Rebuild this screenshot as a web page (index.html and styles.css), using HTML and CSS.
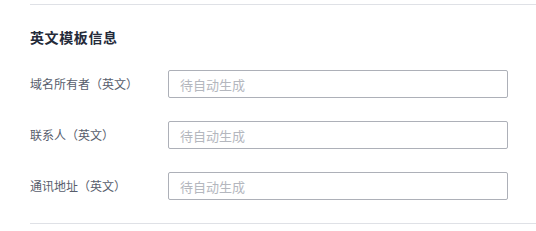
FILE: index.html
```html
<!DOCTYPE html>
<html lang="zh-CN">
<head>
<meta charset="utf-8">
<title>英文模板信息</title>
<link rel="stylesheet" href="styles.css">
</head>
<body>
<section class="panel">
  <h3 class="panel-title">英文模板信息</h3>
  <div class="form">
    <div class="row">
      <label class="label">域名所有者（英文）</label>
      <input class="field" type="text" placeholder="待自动生成">
    </div>
    <div class="row">
      <label class="label">联系人（英文）</label>
      <input class="field" type="text" placeholder="待自动生成">
    </div>
    <div class="row">
      <label class="label">通讯地址（英文）</label>
      <input class="field" type="text" placeholder="待自动生成">
    </div>
  </div>
</section>
</body>
</html>
```
FILE: styles.css
```css
html, body {
  margin: 0;
  padding: 0;
  background: #ffffff;
}
body {
  font-family: "Noto Sans CJK SC", "Noto Sans", sans-serif;
  overflow: hidden;
}
.panel {
  margin: 4px 0 0 30px;
  border-top: 1px solid #dfe1e6;
  border-bottom: 1px solid #dfe1e6;
  padding: 22px 0 23px 0;
}
.panel-title {
  margin: 0;
  font-size: 14px;
  line-height: 20px;
  font-weight: 700;
  color: #252b3a;
  letter-spacing: 0.6px;
}
.form {
  display: flex;
  flex-direction: column;
  gap: 23px;
  margin-top: 23px;
}
.row {
  display: flex;
  align-items: center;
  height: 28px;
}
.label {
  width: 138px;
  flex: none;
  font-size: 12px;
  line-height: 20px;
  color: #575d6c;
}
.field {
  box-sizing: border-box;
  width: 340px;
  height: 28px;
  margin: 0;
  padding: 0 10px 0 11px;
  border: 1px solid #adb0b8;
  border-radius: 2px;
  font-family: inherit;
  font-size: 13px;
  color: #252b3a;
  background: #fff;
  outline: none;
}
.field::placeholder {
  color: #b4b7be;
  opacity: 1;
}
```
